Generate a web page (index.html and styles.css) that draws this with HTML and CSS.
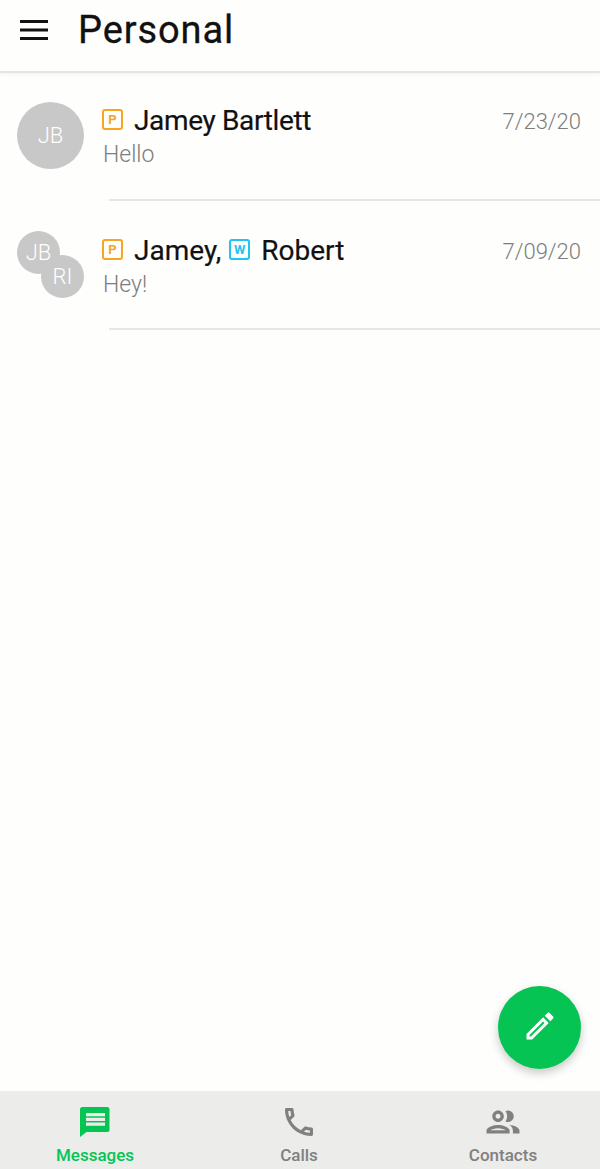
FILE: index.html
```html
<!DOCTYPE html>
<html>
<head>
  <link rel="stylesheet" href="styles.css">
</head>

<body>
  <header class="topbar">
    <svg class="menu-icon" viewBox="0 0 28 20" width="28" height="20">
      <rect x="0" y="0" width="28" height="3" />
      <rect x="0" y="8.5" width="28" height="3" />
      <rect x="0" y="17" width="28" height="3" />
    </svg>
    <h1>Personal</h1>
  </header>

  <main class="threads">
    <div class="thread thread-single">
      <div class="avatar">JB</div>
      <div class="thread-body">
        <div class="thread-top">
          <span class="badge badge-p">P</span>
          <span class="name name-tight">Jamey Bartlett</span>
          <span class="date">7/23/20</span>
        </div>
        <div class="preview">Hello</div>
      </div>
    </div>

    <div class="thread thread-group">
      <div class="avatar-pair">
        <div class="mini mini-a">JB</div>
        <div class="mini mini-b">RI</div>
      </div>
      <div class="thread-body">
        <div class="thread-top">
          <span class="badge badge-p">P</span>
          <span class="name">Jamey,</span>
          <span class="badge badge-w">W</span>
          <span class="name">Robert</span>
          <span class="date">7/09/20</span>
        </div>
        <div class="preview">Hey!</div>
      </div>
    </div>
  </main>

  <button class="fab">
    <svg viewBox="0 0 24 24" width="36" height="36">
      <path d="M14.06 9.02l.92.92L5.92 19H5v-.92l9.06-9.06M17.66 3c-.25 0-.51.1-.7.29l-1.83 1.83 3.75 3.75 1.83-1.83c.39-.39.39-1.02 0-1.41l-2.34-2.34c-.2-.2-.45-.29-.71-.29zm-3.6 3.19L3 17.25V21h3.75L17.81 9.94l-3.75-3.75z" />
    </svg>
  </button>

  <nav class="tabs">
    <div class="tab tab-active">
      <svg viewBox="0 0 34 30" width="34" height="30">
        <path d="M4.500 0h25c1 0 2 1 2 2v21c0 1-1 2-2 2H8.500L2 30V2c0-1 1-2 2.500-2Z" />
        <path class="tab-lines" d="M8 6h19v3.300H8zM8 10.700h19v3.300H8zM8 15.400h19v3.300H8z" />
      </svg>
      <span>Messages</span>
    </div>
    <div class="tab">
      <svg viewBox="1.07 2.35 21.86 19.3" width="34" height="30">
        <path d="M6.54 5c.06.89.21 1.76.45 2.59l-1.2 1.2c-.41-1.2-.67-2.47-.76-3.79h1.51m9.86 12.02c.85.24 1.72.39 2.6.45v1.49c-1.32-.09-2.59-.35-3.8-.75l1.2-1.19M7.5 3H4c-.55 0-1 .45-1 1 0 9.39 7.61 17 17 17 .55 0 1-.45 1-1v-3.49c0-.55-.45-1-1-1-1.24 0-2.45-.2-3.57-.57-.1-.04-.21-.05-.31-.05-.26 0-.51.1-.71.29l-2.2 2.2c-2.83-1.45-5.15-3.76-6.59-6.59l2.2-2.2c.28-.28.36-.67.25-1.02C8.7 6.45 8.5 5.25 8.5 4c0-.55-.45-1-1-1z" />
      </svg>
      <span>Calls</span>
    </div>
    <div class="tab">
      <svg viewBox="1.7 2.91 20.6 18.18" width="34" height="30">
        <path d="M9 13.75c-2.34 0-7 1.17-7 3.5V19h14v-1.75c0-2.33-4.66-3.5-7-3.5zM4.34 17c.84-.58 2.87-1.25 4.66-1.25s3.82.67 4.66 1.25H4.34zM9 12c1.93 0 3.5-1.57 3.5-3.5S10.93 5 9 5 5.5 6.57 5.5 8.5 7.07 12 9 12zm0-5c.83 0 1.5.67 1.5 1.5S9.83 10 9 10s-1.5-.67-1.5-1.5S8.17 7 9 7zm7.04 6.81c1.16.84 1.96 1.96 1.96 3.44V19h4v-1.75c0-2.02-3.5-3.17-5.96-3.44zM15 12c1.93 0 3.5-1.57 3.5-3.5S16.93 5 15 5c-.54 0-1.04.13-1.5.35.63.89 1 1.98 1 3.15s-.37 2.26-1 3.15c.46.22.96.35 1.5.35z" />
      </svg>
      <span>Contacts</span>
    </div>
  </nav>
</body>

</html>
```

FILE: styles.css
```css
:root {
  --green: #06c454;
  --avatar-grey: #c8c8c8;
  --muted: #7d7d7d;
  --line: #e6e6e6;
}

html, body {
  height: 100%;
}

body {
  margin: 0;
  background-color: #fefefd;
  color: #111;
  font-family: Roboto, "Noto Sans", sans-serif;
  display: flex;
  flex-direction: column;
  overflow: hidden;
  position: relative;
}

.topbar {
  height: 59px;
  flex-shrink: 0;
  display: flex;
  align-items: center;
  padding: 0 0 12px 20px;
  border-bottom: 2px solid #e4e4e4;
  box-shadow: 0 2px 5px rgba(0, 0, 0, 0.04);
}

.menu-icon {
  fill: #111;
}

.topbar h1 {
  margin: 0 0 0 30px;
  font-size: 38px;
  font-weight: 400;
  letter-spacing: 0.9px;
  -webkit-text-stroke: 0.3px #111;
}

.threads {
  flex: 1;
}

.thread {
  height: 128px;
  display: flex;
  padding-left: 17px;
  position: relative;
}

.thread-group {
  height: 129px;
}

.thread::after {
  content: "";
  position: absolute;
  left: 109px;
  right: 0;
  bottom: 0;
  height: 2px;
  background-color: var(--line);
}

.avatar {
  width: 67px;
  height: 67px;
  margin-top: 29px;
  border-radius: 50%;
  background-color: var(--avatar-grey);
  color: #fff;
  font-size: 22px;
  font-weight: 300;
  display: flex;
  align-items: center;
  justify-content: center;
}

.avatar-pair {
  width: 67px;
  height: 67px;
  margin-top: 30px;
  position: relative;
}

.mini {
  position: absolute;
  width: 43px;
  height: 43px;
  border-radius: 50%;
  background-color: var(--avatar-grey);
  color: #fff;
  font-size: 22px;
  font-weight: 300;
  display: flex;
  align-items: center;
  justify-content: center;
}

.mini-a {
  left: 0;
  top: 0;
}

.mini-b {
  right: 0;
  bottom: 0;
}

.thread-body {
  flex: 1;
  margin-left: 18px;
  padding-right: 19px;
}

.thread-single .thread-body {
  padding-top: 29px;
}

.thread-group .thread-body {
  padding-top: 31px;
}

.thread-top {
  display: flex;
  align-items: center;
  height: 36px;
}

.badge {
  width: 21px;
  height: 21px;
  box-sizing: border-box;
  border-radius: 3px;
  border: 2px solid;
  font-size: 13px;
  font-weight: 700;
  display: flex;
  align-items: center;
  justify-content: center;
  margin-right: 11px;
  margin-bottom: 2px;
  flex-shrink: 0;
}

.badge-p {
  border-color: #f6a623;
  color: #f6a623;
}

.badge-w {
  border-color: #1fc4f4;
  color: #1fc4f4;
}

.name {
  font-size: 28px;
  -webkit-text-stroke: 0.2px #111;
}

.name-tight {
  letter-spacing: -0.35px;
}

.name + .badge {
  margin-left: 8px;
}

.date {
  margin-left: auto;
  margin-top: 2px;
  font-size: 22px;
  font-weight: 300;
  color: var(--muted);
}

.preview {
  font-size: 23px;
  font-weight: 300;
  color: var(--muted);
  margin-top: 3px;
  padding-left: 1px;
}

.fab {
  position: absolute;
  right: 19px;
  bottom: 100px;
  width: 83px;
  height: 83px;
  border: none;
  border-radius: 50%;
  padding: 0 0 4px;
  background-color: var(--green);
  fill: #fff;
  display: flex;
  align-items: center;
  justify-content: center;
  box-shadow: 0 4px 10px rgba(0, 0, 0, 0.22);
}

.tabs {
  height: 62px;
  flex-shrink: 0;
  background-color: #ececeb;
  display: flex;
  justify-content: space-between;
  padding: 16px 12px 0 10px;
}

.tab {
  width: 170px;
  display: flex;
  flex-direction: column;
  align-items: center;
  color: #808080;
  fill: #808080;
  font-size: 17px;
  font-weight: 500;
}

.tab span {
  margin-top: 8px;
  line-height: 20px;
}

.tab-active {
  color: var(--green);
  fill: var(--green);
}

.tab-lines {
  fill: #ececeb;
}
```
